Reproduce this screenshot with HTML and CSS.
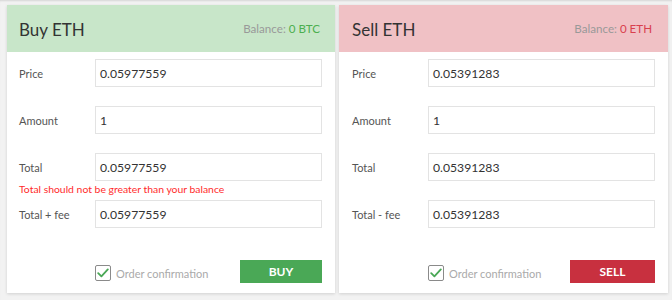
FILE: index.html
```html
<!DOCTYPE html>
<html>
<head>
<meta charset="utf-8">
<link rel="stylesheet" href="styles.css">
</head>
<body>
<div class="page">
  <section class="card">
    <header class="card-head buy-head">
      <h2 class="title">Buy ETH</h2>
      <div class="balance">Balance: <span class="bal-buy">0 BTC</span></div>
    </header>
    <div class="card-body">
      <div class="row"><label class="lbl">Price</label><div class="inp">0.05977559</div></div>
      <div class="row"><label class="lbl">Amount</label><div class="inp">1</div></div>
      <div class="row"><label class="lbl">Total</label><div class="inp">0.05977559</div>
        <div class="err">Total should not be greater than your balance</div></div>
      <div class="row"><label class="lbl">Total + fee</label><div class="inp">0.05977559</div></div>
      <div class="actions">
        <div class="confirm">
          <span class="check"><svg width="12" height="10" viewBox="0 0 12 10"><path d="M1.2 5.2 L4.4 8.4 L10.8 1.4" fill="none" stroke="#4aa856" stroke-width="1.8" stroke-linecap="round" stroke-linejoin="round"/></svg></span>
          <span class="confirm-text">Order confirmation</span>
        </div>
        <button class="btn btn-buy">BUY</button>
      </div>
    </div>
  </section>
  <section class="card">
    <header class="card-head sell-head">
      <h2 class="title">Sell ETH</h2>
      <div class="balance">Balance: <span class="bal-sell">0 ETH</span></div>
    </header>
    <div class="card-body">
      <div class="row"><label class="lbl">Price</label><div class="inp">0.05391283</div></div>
      <div class="row"><label class="lbl">Amount</label><div class="inp">1</div></div>
      <div class="row"><label class="lbl">Total</label><div class="inp">0.05391283</div></div>
      <div class="row"><label class="lbl">Total - fee</label><div class="inp">0.05391283</div></div>
      <div class="actions">
        <div class="confirm">
          <span class="check"><svg width="12" height="10" viewBox="0 0 12 10"><path d="M1.2 5.2 L4.4 8.4 L10.8 1.4" fill="none" stroke="#4aa856" stroke-width="1.8" stroke-linecap="round" stroke-linejoin="round"/></svg></span>
          <span class="confirm-text">Order confirmation</span>
        </div>
        <button class="btn btn-sell">SELL</button>
      </div>
    </div>
  </section>
</div>
</body>
</html>
```
FILE: styles.css
```css
* { box-sizing: border-box; }
html, body { margin: 0; padding: 0; }
body {
  background: #f2f2f2;
  font-family: Lato, "Open Sans", sans-serif;
  width: 672px;
  height: 300px;
  overflow: hidden;
  box-shadow: inset 0 2px 2px -1px rgba(0,0,0,0.12);
}
.page {
  display: grid;
  grid-template-columns: 328px 329px;
  gap: 4px;
  padding: 5px 4px 0 7px;
}
.card {
  background: #fff;
  height: 288px;
  box-shadow: 0 1px 3px rgba(0,0,0,0.14);
  display: flex;
  flex-direction: column;
}
.card-head {
  height: 47px;
  display: flex;
  align-items: center;
  justify-content: space-between;
  padding: 0 15px 0 12px;
}
.buy-head { background: #c8e6c9; }
.sell-head { background: #f0c1c5; padding-left: 13px; padding-right: 16px; }
.title {
  margin: 0;
  font-size: 17px;
  font-weight: 400;
  color: #333;
  padding-top: 2px;
}
.balance {
  font-size: 11.6px;
  color: #999;
}
.bal-buy { color: #4caf50; }
.bal-sell { color: #d9404e; }
.card-body {
  flex: 1;
  display: flex;
  flex-direction: column;
  padding: 7px 13px 10px 12px;
}
.card:nth-child(2) .card-body { padding-left: 13px; }
.row {
  position: relative;
  display: flex;
  align-items: center;
  height: 28px;
  margin-bottom: 19px;
}
.lbl {
  width: 76px;
  font-size: 11px;
  color: #555;
}
.inp {
  flex: 1;
  height: 28px;
  border: 1px solid #e3e3e3;
  display: flex;
  align-items: center;
  padding: 0 4px;
  font-size: 12.2px;
  color: #333;
}
.err {
  position: absolute;
  left: 0;
  top: 30px;
  font-size: 10.4px;
  color: #ff2b2b;
  white-space: nowrap;
}
.actions {
  margin-top: auto;
  display: flex;
  align-items: center;
  justify-content: space-between;
  padding-left: 76px;
  height: 23px;
}
.confirm {
  display: flex;
  align-items: center;
  gap: 5px;
  margin-top: 3px;
}
.check {
  width: 16px;
  height: 16px;
  border: 1px solid #8a8a8a;
  border-radius: 2px;
  display: flex;
  align-items: center;
  justify-content: center;
}
.confirm-text {
  font-size: 11px;
  color: #aaa;
}
.btn {
  width: 82px;
  height: 23px;
  border: 0;
  color: #fff;
  font-family: Lato, sans-serif;
  font-weight: 700;
  font-size: 12px;
}
.btn-buy { background: #4aa856; }
.btn-sell { background: #c8303f; width: 85px; }
```
